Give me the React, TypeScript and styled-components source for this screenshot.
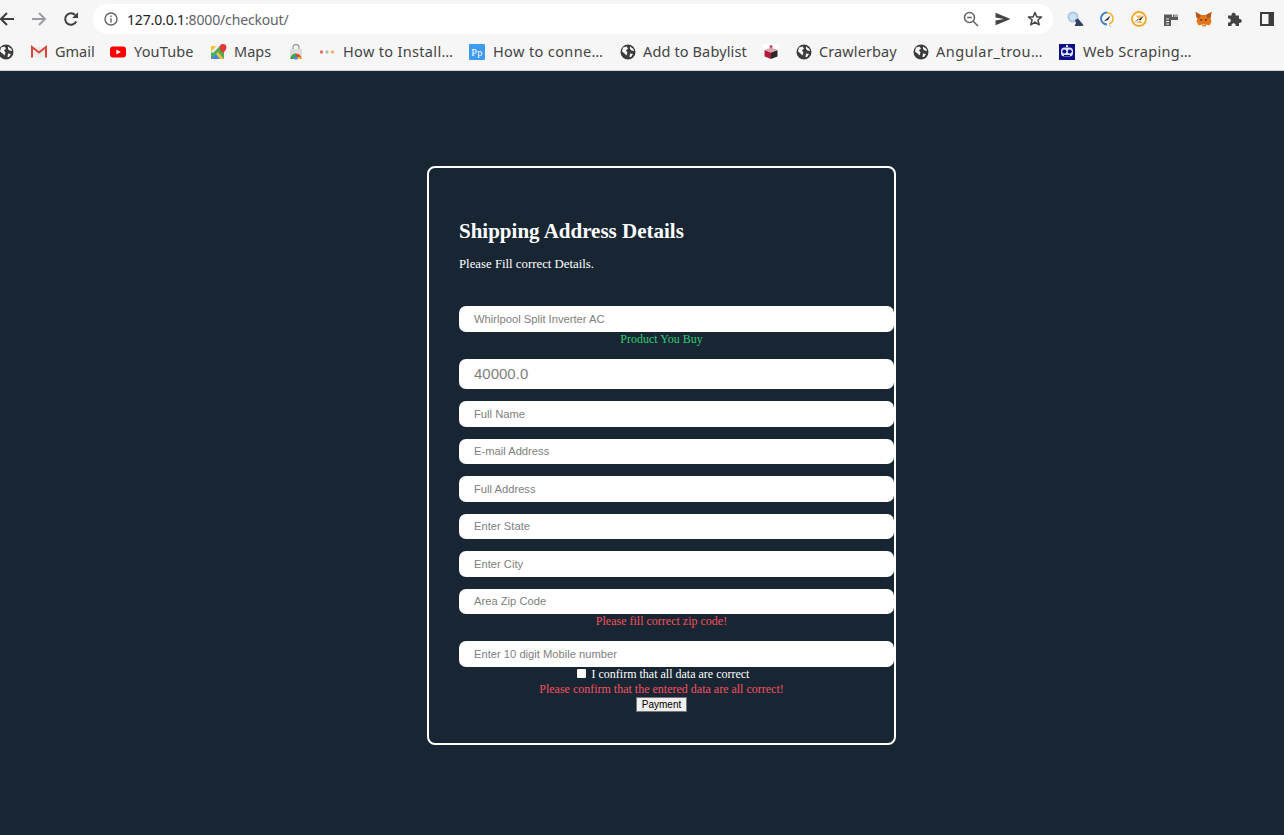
import React from "react";
import styled, { createGlobalStyle } from "styled-components";

const Global = createGlobalStyle`
  html, body { margin: 0; padding: 0; height: 100%; background: #182634; }
  #root { height: 835px; overflow: hidden; }
`;

const Page = styled.div`
  width: 1284px; height: 835px; display: flex; flex-direction: column;
  background: #182634; overflow: hidden;
`;
const Chrome = styled.header`
  height: 71px; flex: none; background: #f6f6f6; border-bottom: 1px solid #d0d0d0; box-sizing: border-box;
  display: flex; flex-direction: column;
`;
const Toolbar = styled.div`
  height: 38px; flex: none; display: flex; align-items: center;
`;
const NavButton = styled.span<{ $ml: number }>`
  width: 16px; height: 30px; flex: none; display: flex; align-items: center; justify-content: center;
  margin-left: ${(p) => p.$ml}px;
`;
const Omnibox = styled.div`
  width: 960px; height: 30px; margin-left: 14px; flex: none; background: #fff; border-radius: 15px;
  display: flex; align-items: center; box-sizing: border-box; padding: 0 10px 0 11px;
`;
const Url = styled.span`
  font: 14px "Noto Sans", sans-serif; color: #5f6368; margin-left: 9px; flex: 1; letter-spacing: -0.15px;
  b { font-weight: 400; color: #202124; }
`;
const OmniIcons = styled.div`
  display: flex; align-items: center; gap: 16px;
`;
const Extensions = styled.div`
  display: flex; align-items: center; margin-left: 6px;
`;
const ExtSlot = styled.span`
  width: 32px; height: 30px; flex: none; display: flex; align-items: center; justify-content: center;
`;
const Bookmarks = styled.div`
  height: 28px; display: flex; align-items: center; margin-left: -2px;
  font: 14.5px "Noto Sans", sans-serif; color: #444;
`;
const Mark = styled.span<{ $w: number; $ls?: number; $gap?: number }>`
  display: flex; align-items: center; gap: ${(p) => p.$gap ?? 8}px; white-space: nowrap; flex: none;
  width: ${(p) => p.$w}px; letter-spacing: ${(p) => p.$ls ?? 0}px;
`;
const Label = styled.span`
  padding-bottom: 2px;
`;
const Main = styled.main`
  flex: 1; display: flex; justify-content: center; align-items: flex-start; padding: 95px 0 0 39px;
`;
const Card = styled.form`
  width: 469px; height: 579px; box-sizing: border-box; border: 2px solid #fff; border-radius: 8px;
  padding: 0 0 0 30px; text-align: center; font-family: "Liberation Serif", serif; color: #fff; font-size: 12px;
`;
const Title = styled.h2`
  margin: 50px 0 0; font: 700 21px/27px "Liberation Serif", serif; text-align: left; color: #fff;
`;
const Sub = styled.p`
  margin: 12px 0 0; font: 12.8px/15px "Liberation Serif", serif; text-align: left; color: #fff;
`;
const Field = styled.input<{ $big?: boolean; $mt: number }>`
  display: block; box-sizing: border-box; width: 435px; height: ${(p) => (p.$big ? 30 : 25.5)}px;
  margin: ${(p) => p.$mt}px 0 0; padding: 0 15px; border: 0; border-radius: 7px; background: #fff; outline: 0;
  font: ${(p) => (p.$big ? "15px" : "11.2px")} "Liberation Sans", sans-serif;
  &::placeholder { color: #808080; opacity: 1; }
`;
const Hint = styled.div<{ $color: string; $mt?: number }>`
  width: 405px; line-height: 14px; font-size: 12px; color: ${(p) => p.$color}; margin-top: ${(p) => p.$mt ?? 0}px;
`;
const Confirm = styled.label`
  display: flex; justify-content: center; align-items: center; width: 408px; height: 14px; line-height: 14px; color: #fff;
`;
const Check = styled.input`
  width: 9px; height: 9px; margin: 0 6px 0 0; appearance: none; background: #fff; border-radius: 1px; border: 0;
`;
const Pay = styled.button`
  display: block; margin: 1px auto 0; transform: translateX(-15px); height: 15px; width: 51px; padding: 0; box-sizing: border-box;
  border: 1px solid #767676; background: #efefef; color: #000; font: 10px/13px "Liberation Sans", sans-serif;
`;

const Globe = () => (
  <svg width="16" height="16" viewBox="0 0 16 16">
    <circle cx="8" cy="8" r="7.5" fill="#3c3c3c" />
    <path d="M3 3.5 L6.5 2.5 L8 4.5 L6 6.5 L7.5 8.5 L6.5 11.5 L4.5 9.5 L2 7.5 Z M10 2.5 L13.5 5 L14 7 L11.5 6.5 L10 5 Z M10 9.5 L13 10 L11 13 L9.5 13 Z" fill="#f6f6f6" />
  </svg>
);
const Back = ({ c }: { c: string }) => (
  <svg width="16" height="16" viewBox="0 0 16 16" fill="none" stroke={c} strokeWidth="2"><path d="M15 8H2M8 2 2 8l6 6" /></svg>
);
const Fwd = ({ c }: { c: string }) => (
  <svg width="16" height="16" viewBox="0 0 16 16" fill="none" stroke={c} strokeWidth="2"><path d="M1 8h13M8 2l6 6-6 6" /></svg>
);
const Reload = () => (
  <svg width="16" height="16" viewBox="0 0 16 16" fill="none"><path d="M13.2 10.5A5.8 5.8 0 1 1 12.2 4" stroke="#3c4043" strokeWidth="2" /><path d="M15 1.2V7H9.2Z" fill="#3c4043" /></svg>
);
const Info = () => (
  <svg width="14" height="14" viewBox="0 0 14 14" fill="none"><circle cx="7" cy="7" r="6" stroke="#5f6368" strokeWidth="1.4" /><path d="M7 6.2V10.4M7 3.6V5" stroke="#5f6368" strokeWidth="1.4" /></svg>
);
const ZoomOut = () => (
  <svg width="16" height="16" viewBox="0 0 16 16" fill="none" stroke="#5f6368" strokeWidth="1.5"><circle cx="6.5" cy="6.5" r="5" /><path d="M10.2 10.2 15 15M4.2 6.5h4.6" /></svg>
);
const Send = () => (
  <svg width="16" height="14" viewBox="0 0 16 14"><path d="M0.5 0.8 15.5 7 0.5 13.2V8.6L9 7 0.5 5.4Z" fill="#444" /></svg>
);
const Star = () => (
  <svg width="16" height="16" viewBox="0 0 16 16" fill="none" stroke="#444" strokeWidth="1.5" strokeLinejoin="round"><path d="M8 1.6 9.9 6h4.7l-3.7 3 1.3 4.8L8 11.1l-4.2 2.7L5.1 9 1.4 6h4.7Z" /></svg>
);
const Gmail = () => (
  <svg width="16" height="16" viewBox="0 0 16 16"><path d="M1 3h14v10.5H1Z" fill="#eee" /><path d="M1 13.5V3l7 5.5L15 3v10.5" fill="none" stroke="#d9473a" strokeWidth="2" /></svg>
);
const YouTube = () => (
  <svg width="16" height="16" viewBox="0 0 16 16"><rect y="2.5" width="16" height="11" rx="3" fill="#f00" /><path d="M6.4 5.5 10.8 8l-4.4 2.5Z" fill="#fff" /></svg>
);
const MapsIcon = () => (
  <svg width="16" height="16" viewBox="0 0 16 16"><path d="M0 2h13v13H0Z" fill="#4caf50" /><path d="M0 15 7 8l6 7Z" fill="#4285f4" /><path d="M7 8l6 7H9L5 10Z" fill="#fbc02d" /><path d="M0 2h6L0 8Z" fill="#fbc02d" /><path d="M5 2h4L2 9 0 8Z" fill="#eee" /><path d="M12 0a3.4 3.4 0 0 1 3.4 3.4C15.4 6 12 9 12 9S8.6 6 8.6 3.4A3.4 3.4 0 0 1 12 0Z" fill="#e53935" /></svg>
);
const Store = () => (
  <svg width="16" height="16" viewBox="0 0 16 16"><path d="M2 5h12v10H2Z" fill="#ddd" /><path d="M5 5V3.5a3 3 0 0 1 6 0V5" fill="none" stroke="#999" strokeWidth="1.3" /><path d="M2.5 15a5.5 5.5 0 0 1 11 0Z" fill="#ea4335" /><path d="M2.5 15a5.5 5.5 0 0 1 5.5-5.5V15Z" fill="#34a853" /><path d="M8 15a2.8 2.8 0 0 1 5.5 0Z" fill="#fbbc05" /><circle cx="8" cy="14" r="1.7" fill="#4285f4" /></svg>
);
const Dots = () => (
  <svg width="16" height="16" viewBox="0 0 16 16"><circle cx="2.5" cy="8" r="1.7" fill="#ef6a6a" /><circle cx="8" cy="8" r="1.7" fill="#b9b9b9" /><circle cx="13.5" cy="8" r="1.7" fill="#f0b35d" /></svg>
);
const Pp = () => (
  <svg width="16" height="16" viewBox="0 0 16 16"><rect width="16" height="16" rx="1" fill="#3d9bf0" /><text x="8" y="11.5" textAnchor="middle" fontFamily="Liberation Serif" fontSize="10" fill="#fff">Pp</text></svg>
);
const Gift = () => (
  <svg width="16" height="16" viewBox="0 0 16 16"><rect width="16" height="16" fill="#fff" /><path d="M1.5 6 8 8.5V15L1.5 12.5Z" fill="#b21e3a" /><path d="M14.5 6 8 8.5V15L14.5 12.5Z" fill="#2e2a2c" /><path d="M1.5 6 8 3.5 14.5 6 8 8.5Z" fill="#d9a3ad" /><circle cx="8" cy="2.6" r="1.6" fill="#c9526a" /></svg>
);
const Robot = () => (
  <svg width="16" height="16" viewBox="0 0 16 16"><rect width="16" height="16" fill="#0d1185" /><rect x="7" y="1" width="2" height="2" fill="#dfe3f5" /><rect x="2" y="3.5" width="12" height="9" rx="3.5" fill="#dfe3f5" /><circle cx="5.3" cy="7.5" r="2" fill="#0d1185" /><circle cx="10.7" cy="7.5" r="2" fill="#0d1185" /><rect x="5" y="11" width="6" height="1.2" fill="#0d1185" /></svg>
);
const Ext1 = () => (
  <svg width="17" height="16" viewBox="0 0 17 16"><circle cx="6" cy="6" r="5.5" fill="#a9c9e6" /><circle cx="6" cy="6" r="3.5" fill="#cfe2f3" /><path d="M8 9l3-1.5 2.5 3 3 3.5-1 1H7.5L9 12Z" fill="#33415f" /></svg>
);
const Ext2 = () => (
  <svg width="16" height="17" viewBox="0 0 16 17" fill="none"><path d="M8 1.5A6 6 0 0 1 14 7.5 6 6 0 0 1 10 13" stroke="#f0b62e" strokeWidth="1.6" /><path d="M8 13.5A6 6 0 0 1 8 1.5" stroke="#3f7fd6" strokeWidth="1.8" /><path d="M4.5 10.5 11.5 4.5 9 9Z" fill="#223" /><path d="M10 14l2 2" stroke="#c9d6e6" strokeWidth="1.4" /></svg>
);
const Ext3 = () => (
  <svg width="16" height="16" viewBox="0 0 16 16" fill="none"><circle cx="8" cy="8" r="7" fill="#fff" stroke="#f5a623" strokeWidth="1.8" /><path d="M4.5 4.5h7L8 8Z" fill="#f5b54a" /><path d="M3 12 13 4.5 9.5 9.5 7 8Z" fill="#222" /><path d="M5 12h7L9 9.5Z" fill="#f5b54a" /></svg>
);
const Ext4 = () => (
  <svg width="14" height="14" viewBox="0 0 14 14"><path d="M0 2.5h14V14H0Z" fill="#5a5a5a" /><path d="M7 8h7v6H7Z" fill="#f0f0f0" /><path d="M8.5 1v4M11 2v3M13 1v4" stroke="#f0f0f0" strokeWidth="1" /><path d="M2 7h3M2 9.5h3M2 12h3" stroke="#f0f0f0" strokeWidth="1" /></svg>
);
const Fox = () => (
  <svg width="17" height="17" viewBox="0 0 17 17"><path d="M.5 1 6 4h5l5.5-3-1 6 1 3.5-2 4-3-1-1 2H7.5l-1-2-3 1-2-4 1-3.5Z" fill="#e2761b" /><path d="M.5 1 6 4 4.5 7.5 1.5 7Z" fill="#b5561a" /><path d="M16.5 1 11 4l1.5 3.5 3-.5Z" fill="#b5561a" /><path d="M6.5 10 4.5 8l3 .8ZM10.5 10l2-2-3 .8Z" fill="#3a2a1e" /><path d="M6.5 13h4L8.5 15Z" fill="#d7c1b3" /></svg>
);
const Puzzle = () => (
  <svg width="16" height="16" viewBox="0 0 16 16"><path d="M1 4.5h3.6a2.1 2.1 0 1 1 4 0H12v3.4a2.1 2.1 0 1 1 0 4V15H8.6a2.1 2.1 0 1 0-4 0H1v-3.5a2.1 2.1 0 1 0 0-4Z" fill="#444" /></svg>
);
const Panel = () => (
  <svg width="14" height="14" viewBox="0 0 14 14"><path d="M0 0h14v14H0Z" fill="#3c3c3c" /><path d="M2 2h6.5v10H2Z" fill="#f6f6f6" /></svg>
);

export default function App() {
  return (
    <Page>
      <Global />
      <Chrome>
        <Toolbar>
          <NavButton $ml={-1}><Back c="#3c4043" /></NavButton>
          <NavButton $ml={16}><Fwd c="#9a9ea3" /></NavButton>
          <NavButton $ml={16}><Reload /></NavButton>
          <Omnibox>
            <Info />
            <Url><b>127.0.0.1</b>:8000/checkout/</Url>
            <OmniIcons>
              <ZoomOut />
              <Send />
              <Star />
            </OmniIcons>
          </Omnibox>
          <Extensions>
            <ExtSlot><Ext1 /></ExtSlot>
            <ExtSlot><Ext2 /></ExtSlot>
            <ExtSlot><Ext3 /></ExtSlot>
            <ExtSlot><Ext4 /></ExtSlot>
            <ExtSlot><Fox /></ExtSlot>
            <ExtSlot><Puzzle /></ExtSlot>
            <ExtSlot><Panel /></ExtSlot>
          </Extensions>
        </Toolbar>
        <Bookmarks>
          <Mark $w={33}><Globe /></Mark>
          <Mark $w={79}><Gmail /><Label>Gmail</Label></Mark>
          <Mark $w={101} $ls={0.15}><YouTube /><Label>YouTube</Label></Mark>
          <Mark $w={77} $gap={7}><MapsIcon /><Label>Maps</Label></Mark>
          <Mark $w={31}><Store /></Mark>
          <Mark $w={150} $ls={0.33}><Dots /><Label>How to Install…</Label></Mark>
          <Mark $w={151} $ls={0.38}><Pp /><Label>How to conne…</Label></Mark>
          <Mark $w={143} $ls={0.13} $gap={7}><Globe /><Label>Add to Babylist</Label></Mark>
          <Mark $w={33}><Gift /></Mark>
          <Mark $w={117} $ls={0.1} $gap={7}><Globe /><Label>Crawlerbay</Label></Mark>
          <Mark $w={146} $ls={0.5} $gap={7}><Globe /><Label>Angular_trou…</Label></Mark>
          <Mark $w={140} $ls={0.3}><Robot /><Label>Web Scraping…</Label></Mark>
        </Bookmarks>
      </Chrome>
      <Main>
        <Card onSubmit={(e) => e.preventDefault()}>
          <Title>Shipping Address Details</Title>
          <Sub>Please Fill correct Details.</Sub>
          <Field $mt={34} placeholder="Whirlpool Split Inverter AC" readOnly />
          <Hint $color="#2ecc71">Product You Buy</Hint>
          <Field $mt={13} $big placeholder="40000.0" readOnly />
          <Field $mt={12.5} placeholder="Full Name" />
          <Field $mt={12} placeholder="E-mail Address" />
          <Field $mt={12} placeholder="Full Address" />
          <Field $mt={12} placeholder="Enter State" />
          <Field $mt={12} placeholder="Enter City" />
          <Field $mt={12} placeholder="Area Zip Code" />
          <Hint $color="#f6505f">Please fill correct zip code!</Hint>
          <Field $mt={13} placeholder="Enter 10 digit Mobile number" />
          <Confirm><Check type="checkbox" />I confirm that all data are correct</Confirm>
          <Hint $mt={1} $color="#f6505f">Please confirm that the entered data are all correct!</Hint>
          <Pay type="button">Payment</Pay>
        </Card>
      </Main>
    </Page>
  );
}
